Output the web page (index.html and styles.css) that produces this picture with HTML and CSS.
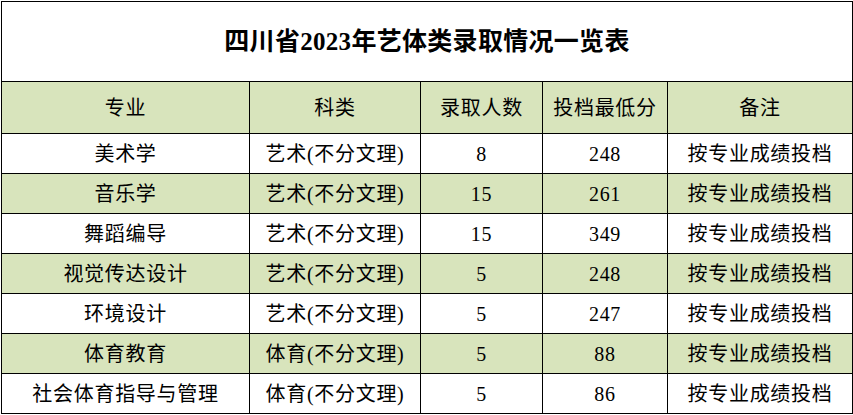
FILE: index.html
```html
<!DOCTYPE html>
<html lang="zh-CN">
<head>
<meta charset="utf-8">
<title>四川省2023年艺体类录取情况一览表</title>
<link rel="stylesheet" href="styles.css">
</head>
<body>
<div class="wrap">
<table class="sheet">
  <colgroup>
    <col class="c1"><col class="c2"><col class="c3"><col class="c4"><col class="c5">
  </colgroup>
  <tr class="title-row"><td colspan="5" class="title">四川省2023年艺体类录取情况一览表</td></tr>
  <tr class="head-row green"><td>专业</td><td>科类</td><td>录取人数</td><td>投档最低分</td><td>备注</td></tr>
  <tr class="row"><td>美术学</td><td>艺术(不分文理)</td><td>8</td><td>248</td><td>按专业成绩投档</td></tr>
  <tr class="row green"><td>音乐学</td><td>艺术(不分文理)</td><td>15</td><td>261</td><td>按专业成绩投档</td></tr>
  <tr class="row"><td>舞蹈编导</td><td>艺术(不分文理)</td><td>15</td><td>349</td><td>按专业成绩投档</td></tr>
  <tr class="row green"><td>视觉传达设计</td><td>艺术(不分文理)</td><td>5</td><td>248</td><td>按专业成绩投档</td></tr>
  <tr class="row"><td>环境设计</td><td>艺术(不分文理)</td><td>5</td><td>247</td><td>按专业成绩投档</td></tr>
  <tr class="row green"><td>体育教育</td><td>体育(不分文理)</td><td>5</td><td>88</td><td>按专业成绩投档</td></tr>
  <tr class="row"><td>社会体育指导与管理</td><td>体育(不分文理)</td><td>5</td><td>86</td><td>按专业成绩投档</td></tr>
</table>
</div>
</body>
</html>
```

FILE: styles.css
```css
html, body {
  margin: 0;
  padding: 0;
  background: #ffffff;
}
.wrap {
  padding: 1px 0 0 1px;
}
.sheet {
  border-collapse: collapse;
  table-layout: fixed;
  width: 851px;
  font-family: "Liberation Serif", "Noto Sans CJK SC", serif;
  color: #000;
}
.c1 { width: 248px; }
.c2 { width: 171px; }
.c3 { width: 122px; }
.c4 { width: 125px; }
.c5 { width: 185px; }
.sheet td {
  border: 1px solid #000;
  padding: 0;
  text-align: center;
  vertical-align: middle;
  font-size: 20px;
  letter-spacing: 0.7px;
  line-height: 1;
  white-space: nowrap;
  overflow: hidden;
}
.title-row td {
  height: 79px;
  font-size: 25px;
  letter-spacing: 0.3px;
  font-weight: bold;
}
.head-row td {
  height: 51px;
}
.row td {
  height: 39px;
}
.green td {
  background: #d8e4bc;
}
```
